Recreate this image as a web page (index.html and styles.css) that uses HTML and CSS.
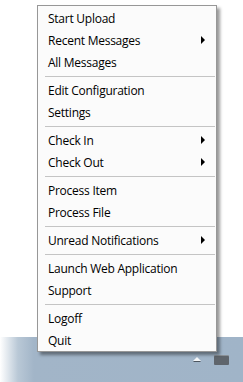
FILE: index.html
```html
<!DOCTYPE html>
<html lang="en">
<head>
  <meta charset="UTF-8">
  <title>Tray Menu</title>
  <link rel="stylesheet" href="styles.css">
</head>
<body>
  <div class="desktop">
    <div class="desk-area"></div>
    <div class="taskbar">
      <span class="tray-arrow"></span>
      <span class="tray-icon"></span>
    </div>

    <ul class="menu">
      <li class="item">Start Upload</li>
      <li class="item sub">Recent Messages</li>
      <li class="item">All Messages</li>
      <li class="sep"></li>
      <li class="item">Edit Configuration</li>
      <li class="item">Settings</li>
      <li class="sep"></li>
      <li class="item sub">Check In</li>
      <li class="item sub">Check Out</li>
      <li class="sep"></li>
      <li class="item">Process Item</li>
      <li class="item">Process File</li>
      <li class="sep"></li>
      <li class="item sub">Unread Notifications</li>
      <li class="sep"></li>
      <li class="item">Launch Web Application</li>
      <li class="item">Support</li>
      <li class="sep"></li>
      <li class="item">Logoff</li>
      <li class="item">Quit</li>
    </ul>
  </div>
</body>
</html>
```

FILE: styles.css
```css
* { box-sizing: border-box; }
body {
  margin: 0;
  font-family: 'Open Sans', 'Liberation Sans', sans-serif;
  background: #fff;
}
.desktop {
  position: relative;
  width: 243px;
  height: 382px;
  display: flex;
  flex-direction: column;
  overflow: hidden;
}
.desk-area {
  height: 337px;
  background: #fff;
}
.taskbar {
  flex: 1;
  background: linear-gradient(to right, #ffffff 0px, #b9c8d6 18px, #a2b5c8 34px, #a0b4c8 100%);
  display: flex;
  align-items: flex-start;
  padding: 19px 0 0 193px;
  gap: 13px;
}
.tray-arrow {
  width: 0;
  height: 0;
  margin-top: 1px;
  border-left: 4px solid transparent;
  border-right: 4px solid transparent;
  border-bottom: 4px solid #f4f6f8;
  filter: drop-shadow(0 1px 0 #4d5660);
}
.tray-icon {
  width: 15px;
  height: 9px;
  background: #5f656c;
  border-radius: 1px;
  box-shadow: 0 -1px 0 #8a9096;
}
.menu {
  position: absolute;
  left: 37px;
  top: 5px;
  width: 180px;
  margin: 0;
  padding: 1px 0 0;
  list-style: none;
  background: #fbfbfb;
  border: 1px solid #979797;
  box-shadow: 3px 3px 3px rgba(0, 0, 0, 0.4);
}
.item {
  height: 22px;
  display: flex;
  align-items: center;
  justify-content: space-between;
  padding: 0 11px 0 10px;
  font-size: 12px;
  letter-spacing: -0.25px;
  color: #000;
  white-space: nowrap;
}
.sub::after {
  content: '';
  width: 0;
  height: 0;
  border-left: 4px solid #000;
  border-top: 4px solid transparent;
  border-bottom: 4px solid transparent;
}
.sep {
  height: 1px;
  margin: 3px 1px 2px 7px;
  background: #c4c4c4;
}
```
